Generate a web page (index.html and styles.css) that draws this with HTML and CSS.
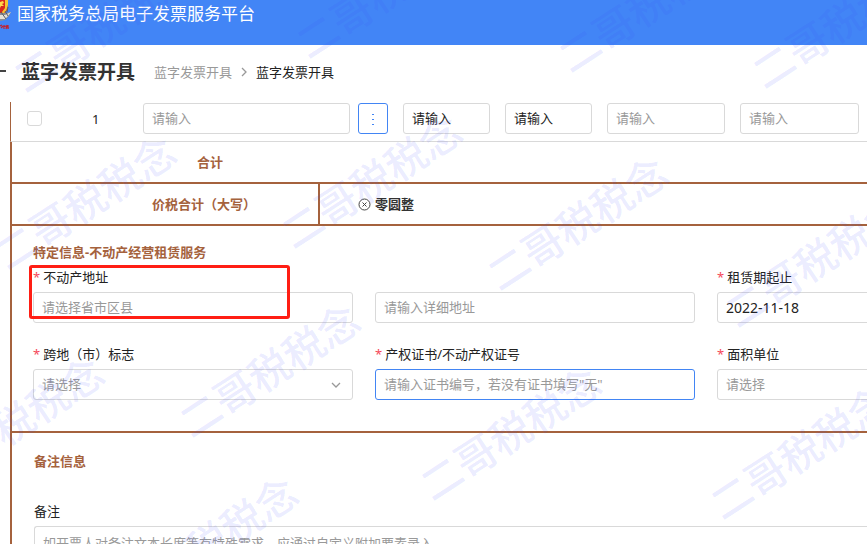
FILE: index.html
```html
<!DOCTYPE html>
<html lang="zh-CN">
<head>
    <meta charset="UTF-8">
    <meta name="viewport" content="width=device-width, initial-scale=1.0">
    <title>蓝字发票开具</title>
    <link rel="stylesheet" href="styles.css">
</head>
<body>
    <!-- Top bar -->
    <header class="topbar">
        <svg class="logo" width="12" height="32" viewBox="0 0 12 32" aria-hidden="true">
            <path d="M0 0h6l2 4-1 6-3 5H0z" fill="#d9281e"/>
            <path d="M5 0h3v5L6 11l-3 3-1-2 3-4z" fill="#f4c531"/>
            <path d="M0 2l3-1 1 2-2 1 2 2-3 0-1 2z" fill="#ffd84a"/>
            <path d="M0 13l6 0 5-1-2 4-4 4-5 1z" fill="#8b8d92"/>
            <path d="M0 15l5 0 6-3-3 4-3 3-5 0z" fill="#e6e2d8"/>
            <path d="M1 12l5 7M5 11l3 5M8 7l-1 5" stroke="#5c5d63" fill="none"/>
            <path d="M0 26l2-1M1 28l2-2M4 25v4M3 27l3-1M7 25l-1 4M6 26l3 2M8 25v4" stroke="#c4202c" stroke-width="1.2" fill="none"/>
        </svg>
        <span class="site-name">国家税务总局电子发票服务平台</span>
    </header>

    <!-- Page title -->
    <div class="page-head">
        <button type="button" class="back-btn" aria-label="返回">
            <svg width="16" height="16" viewBox="0 0 16 16"><path d="M16 7H2M7 2L2 7l5 5" fill="none" stroke="#444" stroke-width="2"/></svg>
        </button>
        <h1>蓝字发票开具</h1>
        <nav class="breadcrumb">
            <a href="#">蓝字发票开具</a>
            <svg width="6" height="10" viewBox="0 0 6 10"><path d="M1 1l4 4-4 4" fill="none" stroke="#999" stroke-width="1.3"/></svg>
            <span>蓝字发票开具</span>
        </nav>
    </div>

    <main class="content">
        <form>
            <!-- Item row -->
            <div class="item-row">
                <input type="checkbox" class="item-check" aria-label="选择第1行">
                <span class="item-index">1</span>
                <div class="item-name">
                    <input type="text" placeholder="请输入" aria-label="项目名称">
                    <button type="button" class="more-btn" aria-label="更多">
                        <svg width="4" height="14" viewBox="0 0 4 14"><path d="M1 2h2v1H1zM1 7h2v1H1zM1 12h2v1H1z" fill="#4285f4"/></svg>
                    </button>
                </div>
                <input type="text" class="dark" placeholder="请输入" aria-label="规格型号">
                <input type="text" class="dark" placeholder="请输入" aria-label="单位">
                <input type="text" placeholder="请输入" aria-label="数量">
                <input type="text" placeholder="请输入" aria-label="单价">
            </div>

            <div class="total-row">
                <div class="total-label sum">合计</div>
            </div>
            <div class="total-row">
                <div class="total-label divider">价税合计（大写）</div>
                <div class="total-value">
                    <svg width="13" height="13" viewBox="0 0 13 13"><circle cx="6.5" cy="6.5" r="5.5" fill="none" stroke="#444"/><path d="M4.5 4.5l4 4M8.5 4.5l-4 4" stroke="#444"/></svg>
                    <span>零圆整</span>
                </div>
            </div>

            <!-- Real estate leasing details -->
            <section class="lease">
                <h2>特定信息-不动产经营租赁服务</h2>
                <div class="form-grid">
                    <div class="form-group highlighted">
                        <label for="region" class="required">不动产地址</label>
                        <input type="text" id="region" placeholder="请选择省市区县">
                    </div>
                    <div class="form-group">
                        <input type="text" id="address" placeholder="请输入详细地址" aria-label="详细地址">
                    </div>
                    <div class="form-group">
                        <label for="period" class="required">租赁期起止</label>
                        <input type="text" id="period" class="date" value="2022-11-18">
                    </div>
                    <div class="form-group">
                        <label for="crossCity" class="required">跨地（市）标志</label>
                        <select id="crossCity">
                            <option value="">请选择</option>
                            <option>是</option>
                            <option>否</option>
                        </select>
                    </div>
                    <div class="form-group">
                        <label for="certificate" class="required">产权证书/不动产权证号</label>
                        <input type="text" id="certificate" class="active" placeholder="请输入证书编号，若没有证书填写&quot;无&quot;">
                    </div>
                    <div class="form-group">
                        <label for="areaUnit" class="required">面积单位</label>
                        <select id="areaUnit">
                            <option value="">请选择</option>
                            <option>平方米</option>
                        </select>
                    </div>
                </div>
            </section>

            <!-- Remarks -->
            <section class="remarks">
                <h2>备注信息</h2>
                <label for="remark">备注</label>
                <textarea id="remark" rows="4" placeholder="如开票人对备注文本长度等有特殊需求，应通过自定义附加要素录入"></textarea>
            </section>
        </form>
    </main>

    <!-- Watermark -->
    <svg class="watermark" aria-hidden="true">
        <text transform="translate(103 25) rotate(-33)">二哥税税念</text>
        <text transform="translate(386 -9) rotate(-33)">二哥税税念</text>
        <text transform="translate(648 5) rotate(-33)">二哥税税念</text>
        <text transform="translate(842 21) rotate(-33)">二哥税税念</text>
        <text transform="translate(85 202) rotate(-33)">二哥税税念</text>
        <text transform="translate(371 181) rotate(-33)">二哥税税念</text>
        <text transform="translate(577 223) rotate(-33)">二哥税税念</text>
        <text transform="translate(815 260) rotate(-33)">二哥税税念</text>
        <text transform="translate(13 423) rotate(-33)">二哥税税念</text>
        <text transform="translate(269 370) rotate(-33)">二哥税税念</text>
        <text transform="translate(510 433) rotate(-33)">二哥税税念</text>
        <text transform="translate(800 452) rotate(-33)">二哥税税念</text>
        <text transform="translate(207 543) rotate(-33)">二哥税税念</text>
    </svg>
</body>
</html>
```
FILE: styles.css
```css
/* Base styles */
* {
    box-sizing: border-box;
}

body {
    margin: 0;
    height: 100vh;
    overflow: hidden;
    position: relative;
    font-family: "Noto Sans", "Noto Sans CJK SC", sans-serif;
    font-size: 13px;
    line-height: 20px;
    color: #222;
    background-color: #fff;
}

h1, h2 {
    margin: 0;
}

/* Header */
.topbar {
    display: flex;
    align-items: flex-start;
    gap: 5px;
    height: 45px;
    background-color: #4285f6;
    color: #fff;
}

.site-name {
    font-size: 17px;
    line-height: 28px;
}

.page-head {
    display: flex;
    align-items: center;
    height: 54px;
}

.back-btn {
    display: flex;
    justify-content: flex-end;
    width: 6px;
    margin-right: 15px;
    padding: 0;
    border: none;
    background: none;
    overflow: hidden;
}

.back-btn svg {
    flex: none;
}

h1 {
    font-size: 19px;
    color: #333;
}

.breadcrumb {
    display: flex;
    align-items: center;
    gap: 9px;
    margin-left: 19px;
}

.breadcrumb a {
    color: #999;
    text-decoration: none;
}

/* Inputs */
input[type="text"], select, textarea {
    display: block;
    width: 100%;
    min-width: 0;
    height: 31px;
    padding: 0 8px 1px;
    border: 1px solid #d9d9d9;
    border-radius: 3px;
    background-color: #fff;
    font: inherit;
    color: #222;
    outline: none;
}

::placeholder {
    color: #999;
    opacity: 1;
}

.dark::placeholder {
    color: #222;
}

input[type="text"].active {
    border-color: #4285f4;
}

input[type="text"].date {
    font-size: 14px;
}

select {
    appearance: none;
    color: #999;
}

/* Item table */
.content {
    margin-left: 10px;
    padding-top: 3px;
}

.item-row {
    display: grid;
    grid-template-columns: 54px 47px 245fr 87fr 87fr 118fr 119fr;
    column-gap: 15px;
    align-items: center;
    height: 40px;
    padding: 0 8px 6px 1px;
    border-left: 1px solid #a5623d;
    border-bottom: 1px solid #d9d9d9;
}

.item-index {
    padding-left: 11px;
}

.item-check {
    appearance: none;
    width: 15px;
    height: 15px;
    margin: 0 0 0 15px;
    border: 1px solid #d9d9d9;
    border-radius: 3px;
}

.item-name {
    display: flex;
    gap: 8px;
}

.more-btn {
    display: flex;
    flex: none;
    align-items: center;
    justify-content: center;
    width: 30px;
    height: 31px;
    padding: 0;
    border: 1px solid #4285f4;
    border-radius: 3px;
    background-color: #fff;
}

.total-row {
    display: flex;
    height: 42px;
    border-left: 2px solid #a5623d;
    border-bottom: 2px solid #a5623d;
    line-height: 40px;
    font-weight: bold;
}

.total-label {
    width: 308px;
    padding-left: 78px;
    text-align: center;
    color: #a5623d;
}

.sum {
    padding-left: 88px;
}

.divider {
    border-right: 2px solid #a5623d;
}

.total-value {
    display: flex;
    align-items: center;
    gap: 4px;
    padding-left: 38px;
    color: #333;
}

/* Form sections */
.lease, .remarks {
    border-left: 2px solid #a5623d;
    padding-left: 21px;
}

h2 {
    font-size: 13px;
    line-height: 20px;
    color: #a5623d;
}

.lease {
    height: 207px;
    padding-top: 16px;
    border-bottom: 2px solid #a5623d;
}

.form-grid {
    display: grid;
    grid-template-columns: repeat(3, minmax(320px, 1fr));
    column-gap: 22px;
    row-gap: 21px;
    margin-top: 5px;
}

.form-group {
    position: relative;
    display: flex;
    flex-direction: column;
    justify-content: flex-end;
    gap: 5px;
}

.required::before {
    content: "*";
    margin-right: 3px;
    color: #f5485a;
}

/* Callout frame over the address field */
.highlighted::after {
    content: "";
    box-sizing: border-box;
    position: absolute;
    top: -2px;
    left: -4px;
    width: 261px;
    height: 54px;
    border: 3px solid #ff1e14;
    border-radius: 3px;
}

#crossCity {
    background: #fff url("data:image/svg+xml,%3Csvg xmlns='http://www.w3.org/2000/svg' width='10' height='6'%3E%3Cpath d='M1 1l4 4 4-4' fill='none' stroke='%23999' stroke-width='1.3'/%3E%3C/svg%3E") no-repeat right 11px center;
}

.remarks {
    padding-top: 18px;
    padding-left: 22px;
}

.remarks label {
    display: block;
    margin: 30px 0 5px;
}

.remarks textarea {
    height: 90px;
    padding: 6px 8px;
    border-right: none;
    border-radius: 3px 0 0 3px;
    resize: none;
}

/* Watermark layer */
.watermark {
    position: absolute;
    top: 0;
    left: 0;
    width: 100%;
    height: 100%;
    pointer-events: none;
    font-size: 41px;
    font-weight: 500;
    fill: rgba(60, 70, 255, 0.11);
    text-anchor: middle;
    dominant-baseline: central;
}
```
